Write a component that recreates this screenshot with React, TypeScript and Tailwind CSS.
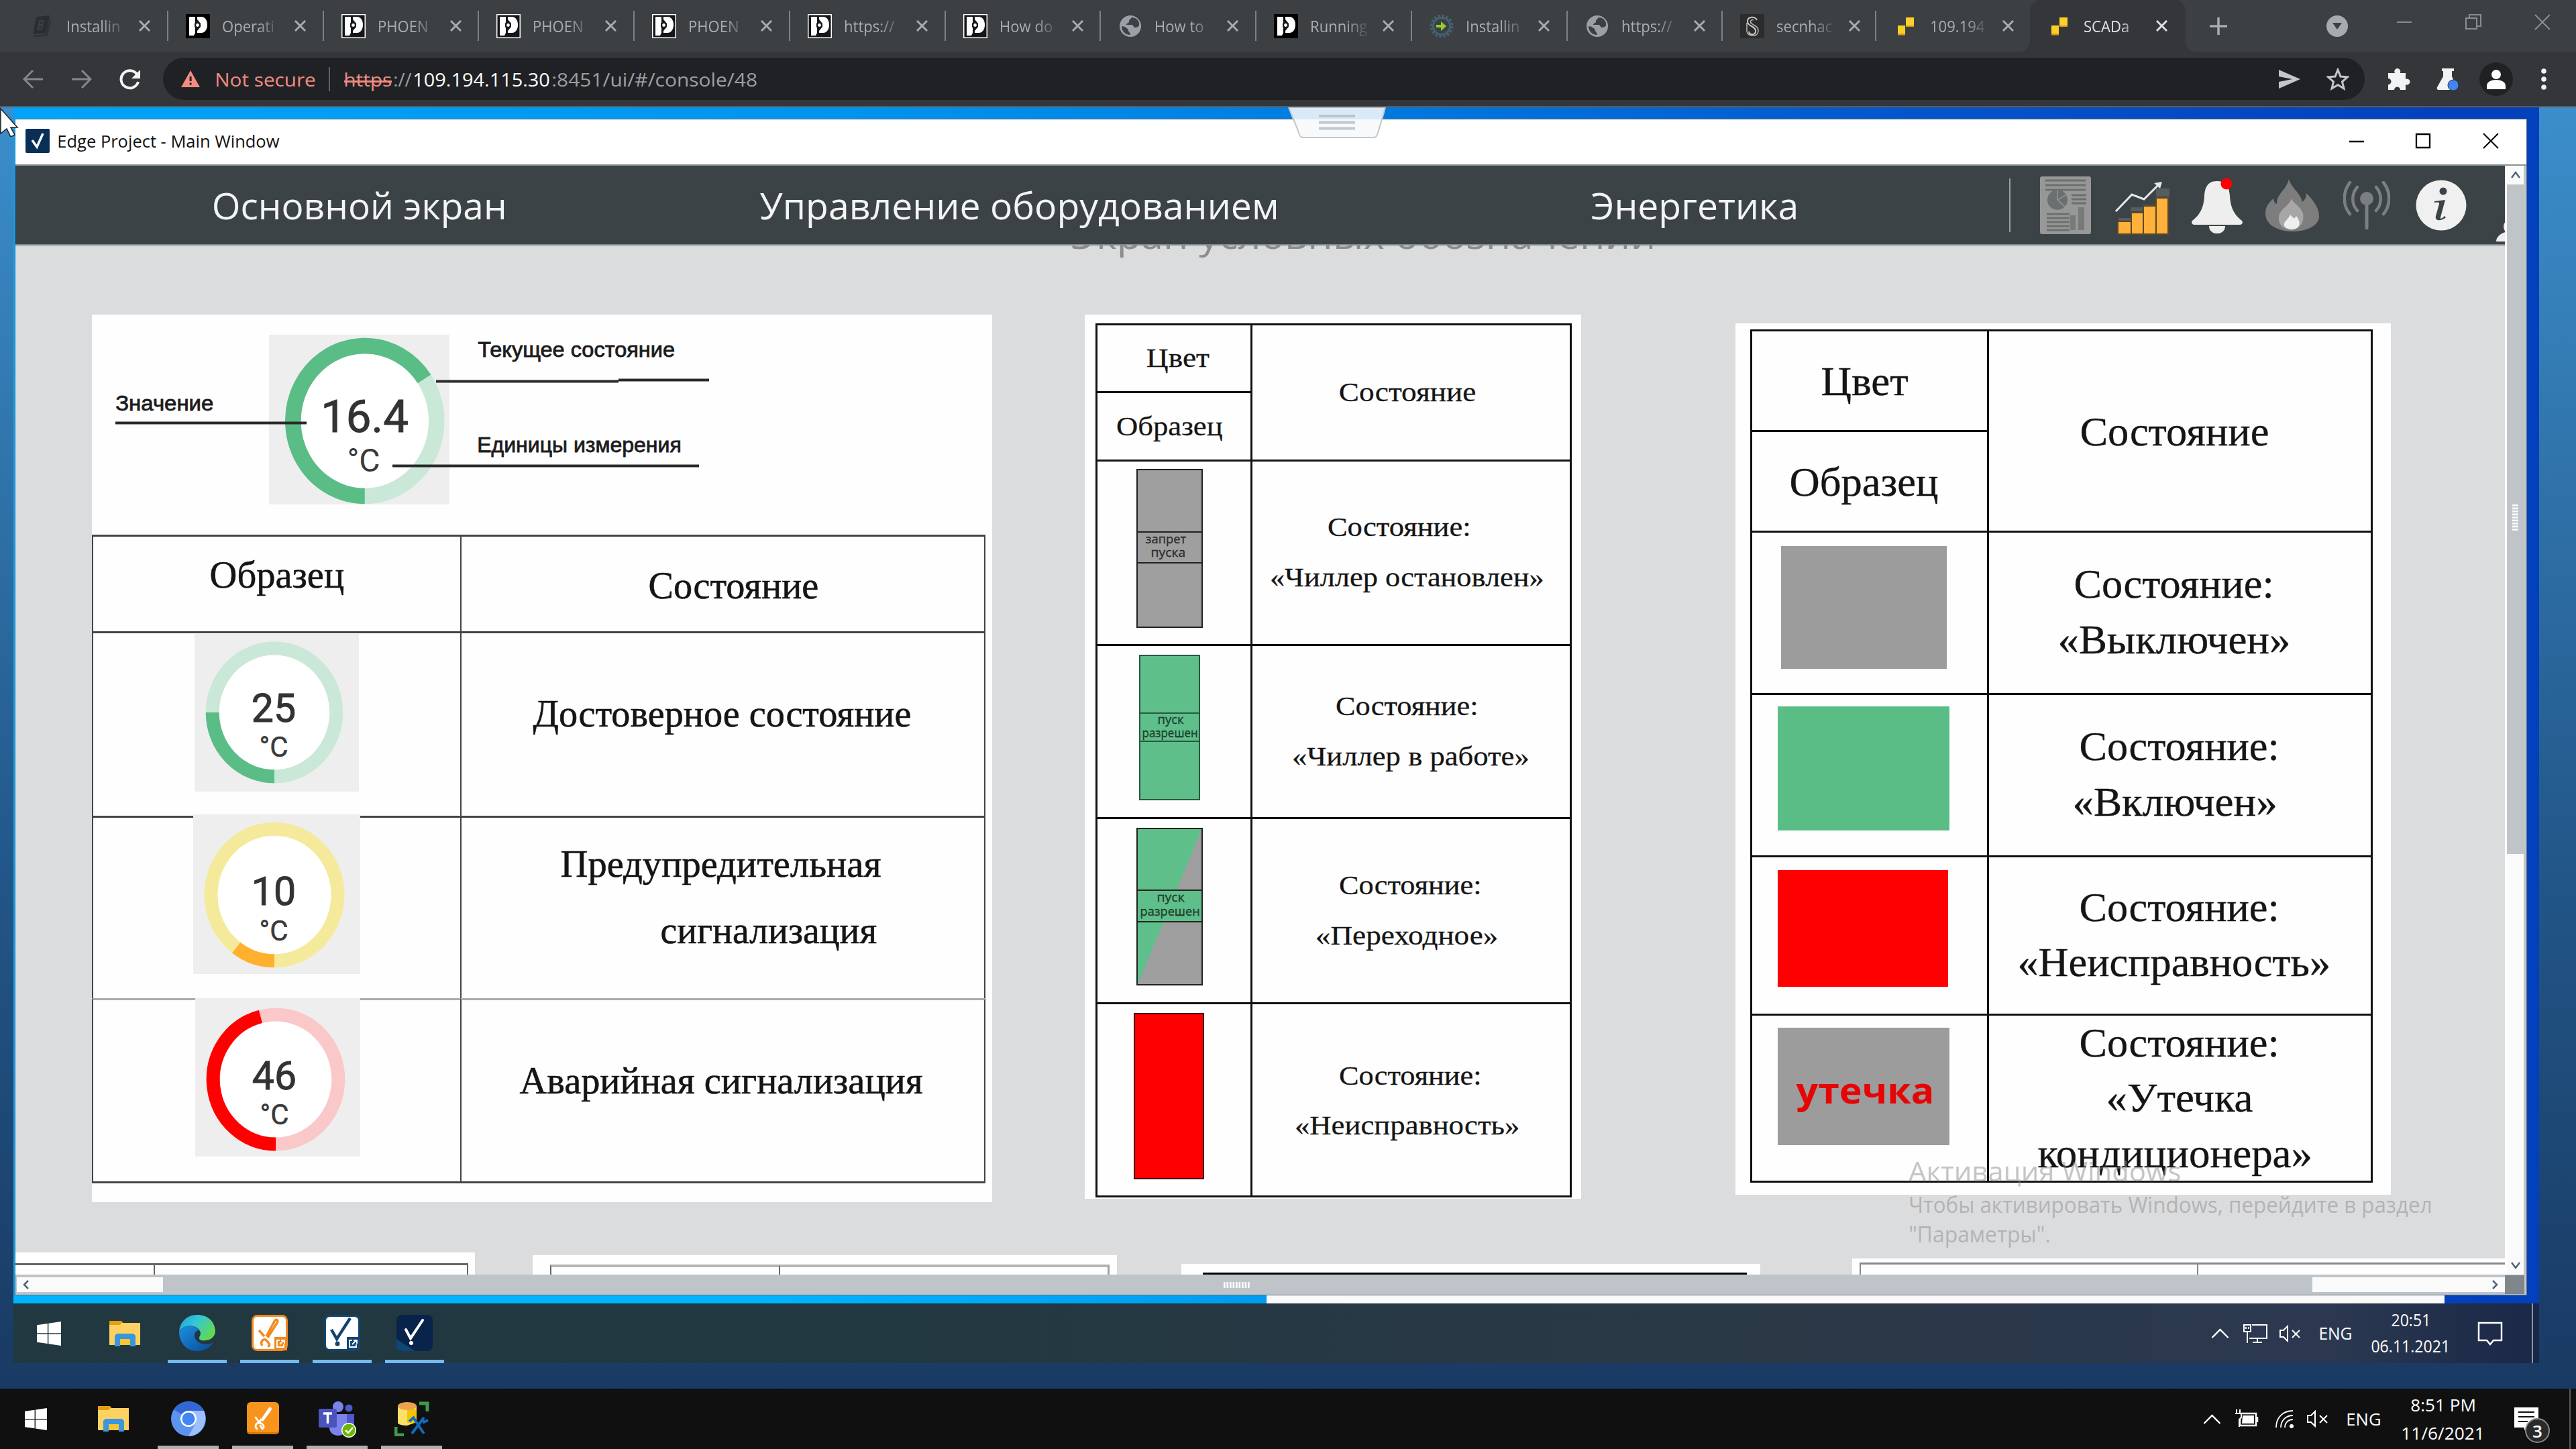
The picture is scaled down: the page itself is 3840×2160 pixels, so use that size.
import React, { useLayoutEffect, useRef, useState } from "react";

/* Text squeezed or stretched horizontally so that it fills its own box. */
function Fit({ className, children }: { className: string; children: string }) {
  const box = useRef<HTMLDivElement>(null);
  const ink = useRef<HTMLSpanElement>(null);
  const [fit, setFit] = useState({ scale: 1, shift: 0 });
  useLayoutEffect(() => {
    if (!box.current || !ink.current) return;
    const size = parseFloat(getComputedStyle(ink.current).fontSize);
    const bearing = size * 0.025;
    const scale = box.current.clientWidth / (ink.current.offsetWidth - bearing * 2);
    setFit({ scale, shift: -bearing * scale });
  }, []);
  return (
    <div ref={box} className={"shrink-0 whitespace-nowrap leading-none " + className}>
      <span
        ref={ink}
        className="inline-block origin-left leading-none"
        style={{ transform: `translateX(${fit.shift}px) scaleX(${fit.scale})` }}
      >
        {children}
      </span>
    </div>
  );
}

/* ---------- browser chrome ---------- */

function PhoenixIcon({ framed }: { framed?: boolean }) {
  return (
    <svg className="h-9 w-9" viewBox="0 0 36 36">
      <rect width="36" height="36" fill={framed ? "#fff" : "#000"} />
      {framed && <rect x="1.5" y="1.5" width="33" height="33" fill="#16161a" />}
      <path d="M5 4h9v24l-2 4H5z" fill="#fff" />
      <path d="M17 4h6c6 0 9 6 9 12s-3 12-9 12h-6z" fill="#fff" />
      <path d="M17 8l5 6v5l-5 6-4-6v-5z" fill="#16161a" />
      <circle cx="17.500" cy="16.500" r="2.400" fill="#fff" />
    </svg>
  );
}

function GlobeIcon() {
  return (
    <svg className="h-9 w-9" viewBox="0 0 36 36">
      <circle cx="18" cy="18" r="16" fill="#9aa0a6" />
      <path d="M20 5c-2 3-4 3-4 6 0 3-4 2-4 5h8c3 0 2 4 5 4s5-1 6-3C32 10 27 5 20 5z" fill="#3c4043" />
      <path d="M5 18c4 0 9 3 10 6 0 3 3 3 3 7-8 0-13-6-13-13z" fill="#3c4043" />
    </svg>
  );
}

function GearArrowIcon() {
  return (
    <svg className="h-9 w-9" viewBox="0 0 36 36">
      <circle cx="18" cy="18" r="15.500" fill="none" stroke="#45606f" strokeWidth="4" strokeDasharray="3.500 2.600" />
      <circle cx="18" cy="18" r="12.500" fill="none" stroke="#45606f" strokeWidth="3" />
      <path d="M10 16h7v-5l8 7-8 7v-5h-7z" fill="#8fd12c" />
    </svg>
  );
}

function SecIcon() {
  return (
    <svg className="h-9 w-9" viewBox="0 0 36 36">
      <rect width="36" height="36" fill="#2c2c2c" />
      <path d="M25 9c-2-6-14-6-14 2s12 6 12 14c0 7-9 7-10 1" fill="none" stroke="#c8c8c8" strokeWidth="2" />
      <path d="M20 9c-4-2-6 3-3 5 5 4 10 4 10 11 0 10-16 9-17 1V13" fill="none" stroke="#b4b4b4" strokeWidth="1.600" />
    </svg>
  );
}

function ScadaIcon() {
  return (
    <svg className="h-9 w-9" viewBox="0 0 36 36">
      <path d="M6 17h11v14H6z" fill="#fccf24" />
      <path d="M18 5h12v14H18z" fill="#fdd02c" />
      <path d="M6 29h11v2.500H6zM18 17h12v2H18z" fill="#d99a14" />
    </svg>
  );
}

function BookIcon() {
  return (
    <svg className="h-9 w-9" viewBox="0 0 36 36">
      <path d="M9 4l20-2-5 26-20 2z" fill="#2b2e31" />
      <path d="M30 7l-5 24-20 2" fill="none" stroke="#303336" strokeWidth="2.500" />
      <path d="M14 10h5l-1 6h-5zM13 17h5l-1 6h-5z" fill="none" stroke="#3c4043" strokeWidth="2" />
    </svg>
  );
}

function CloseX({ className }: { className: string }) {
  return (
    <svg className={className} viewBox="0 0 18 18">
      <path d="M1 1l16 16M17 1L1 17" stroke="currentColor" strokeWidth="3" />
    </svg>
  );
}

const tabs: { title: string; icon: React.ReactNode }[] = [
  { title: "Installin", icon: <BookIcon /> },
  { title: "Operati", icon: <PhoenixIcon /> },
  { title: "PHOEN", icon: <PhoenixIcon framed /> },
  { title: "PHOEN", icon: <PhoenixIcon framed /> },
  { title: "PHOEN", icon: <PhoenixIcon framed /> },
  { title: "https://", icon: <PhoenixIcon framed /> },
  { title: "How do", icon: <PhoenixIcon framed /> },
  { title: "How to", icon: <GlobeIcon /> },
  { title: "Running", icon: <PhoenixIcon /> },
  { title: "Installin", icon: <GearArrowIcon /> },
  { title: "https://", icon: <GlobeIcon /> },
  { title: "secnhac", icon: <SecIcon /> },
  { title: "109.194", icon: <ScadaIcon /> },
];

function TabBody({ title, icon }: { title: string; icon: React.ReactNode }) {
  return (
    <>
      <div className="shrink-0">{icon}</div>
      <div className="ml-[18px] w-[90px] shrink-0 [mask-image:linear-gradient(to_right,black_60%,transparent)]">
        <span className="inline-block origin-left scale-x-[0.92] whitespace-nowrap text-[24px] leading-[34px]">{title}</span>
      </div>
      <CloseX className="ml-[18px] h-[17px] w-[17px] shrink-0" />
    </>
  );
}

function TabStrip() {
  return (
    <div className="flex h-[77px] shrink-0 items-stretch bg-[#3c4043] pl-[19px] font-['Open_Sans',sans-serif] text-[#a9adb1]">
      {tabs.map((t, i) => (
        <div key={i} className={(i < 11 ? "w-[231.750px]" : "w-[229px]") + " flex shrink-0 items-center pl-[26px]"}>
          <TabBody {...t} />
          {i < tabs.length - 1 && <div className="ml-auto h-[45px] w-[2px] bg-[#7e8286]" />}
        </div>
      ))}
      <div className="relative flex w-[232px] shrink-0 items-center rounded-t-[16px] bg-[#35363a] pl-[26px] text-[#dfe1e5]">
        <svg className="absolute -left-4 bottom-0 h-4 w-4" viewBox="0 0 16 16"><path d="M16 0v16H0c10 0 16-6 16-16z" fill="#35363a" /></svg>
        <svg className="absolute -right-4 bottom-0 h-4 w-4" viewBox="0 0 16 16"><path d="M0 0v16h16C6 16 0 10 0 0z" fill="#35363a" /></svg>
        <TabBody title="SCADa" icon={<ScadaIcon />} />
      </div>
      <div className="flex flex-1 items-center pl-[35px]">
        <svg className="h-7 w-7" viewBox="0 0 28 28"><path d="M14 1v26M1 14h26" stroke="#a9adb1" strokeWidth="3.500" /></svg>
        <svg className="ml-[147px] h-8 w-8" viewBox="0 0 32 32"><circle cx="16" cy="16" r="16" fill="#a7abaf" /><path d="M9 11h14l-7 10z" fill="#3c4043" /></svg>
        <svg className="mb-3 ml-[72px] h-6 w-6" viewBox="0 0 24 24"><path d="M1 12h22" stroke="#8b8e91" strokeWidth="2" /></svg>
        <svg className="mb-3 ml-[79px] h-6 w-6" viewBox="0 0 24 24"><path d="M1 6h16v16H1zM6 6V1h17v17h-5" fill="none" stroke="#8b8e91" strokeWidth="2" /></svg>
        <svg className="mb-3 ml-[79px] h-6 w-6" viewBox="0 0 24 24"><path d="M1 1l22 22M23 1L1 23" stroke="#8b8e91" strokeWidth="2" /></svg>
      </div>
    </div>
  );
}

function Toolbar() {
  return (
    <div className="flex h-[83px] shrink-0 items-center border-b-2 border-[#5b5c60] bg-[#35363a] font-['Open_Sans',sans-serif]">
      <svg className="ml-[34px] h-[30px] w-[30px]" viewBox="0 0 30 30"><path d="M30 15H3M15 2L2 15l13 13" fill="none" stroke="#85878a" strokeWidth="3" /></svg>
      <svg className="ml-[43px] h-[30px] w-[30px]" viewBox="0 0 30 30"><path d="M0 15h27M15 2l13 13-13 13" fill="none" stroke="#85878a" strokeWidth="3" /></svg>
      <svg className="ml-[41px] h-8 w-8" viewBox="0 0 32 32"><path d="M26 8.500A13 13 0 1 0 28 20" fill="none" stroke="#f1f3f4" strokeWidth="4" /><path d="M31 2v13H18z" fill="#f1f3f4" /></svg>
      <div className="ml-[33px] flex h-[63px] w-[3282px] shrink-0 items-center rounded-full bg-[#202124] text-[28px]">
        <svg className="ml-[27px] h-[25px] w-7" viewBox="0 0 28 25"><path d="M14 0l14 25H0z" fill="#f28b82" /><path d="M12.600 9h3v7h-3zM12.600 18.500h3v3h-3z" fill="#202124" /></svg>
        <Fit className="ml-[23px] w-[149px] text-[#f28b82]">Not secure</Fit>
        <div className="ml-5 h-9 w-[2px] bg-[#5f6368]" />
        <div className="relative ml-[21px]">
          <Fit className="w-[71px] text-[#f28b82]">https</Fit>
          <div className="absolute top-[16px] h-[3px] w-[71px] bg-[#f28b82]" />
        </div>
        <Fit className="ml-[3px] w-[26px] text-[#9aa0a6]">://</Fit>
        <Fit className="ml-[3px] w-[203px] text-white">109.194.115.30</Fit>
        <Fit className="ml-[4px] w-[305px] text-[#9aa0a6]">:8451/ui/#/console/48</Fit>
        <svg className="ml-auto mr-[39px] h-7 w-8" viewBox="0 0 32 28"><path d="M0 0l32 14L0 28V18l20-4L0 10z" fill="#c4c7ca" /></svg>
        <svg className="mr-[23px] h-[34px] w-[34px]" viewBox="0 0 34 34"><path d="M17 3l4 10 10.500.8-8 7 2.500 10.200-9-5.500-9 5.500 2.500-10.200-8-7L13 13z" fill="none" stroke="#c4c7ca" strokeWidth="3" /></svg>
      </div>
      <svg className="ml-[34px] h-[34px] w-[34px]" viewBox="0 0 34 34"><path d="M1 8h10a4.500 4.500 0 1 1 8-1v1h8v9a4.500 4.500 0 1 1 0 8v8h-8a4.500 4.500 0 0 0-9 0H1v-8a4.500 4.500 0 0 0 0-9z" fill="#f1f3f4" /></svg>
      <svg className="ml-[39px] h-[34px] w-[34px]" viewBox="0 0 34 34"><path d="M8 1h18v4h-3v8l8 17c0 2-1 3-3 3H3c-2 0-3-2-2-4l9-16V5H8z" fill="#f1f3f4" /><circle cx="25" cy="26" r="8" fill="#4285f4" stroke="#35363a" strokeWidth="1" /></svg>
      <svg className="ml-[30px] h-[50px] w-[50px]" viewBox="0 0 50 50"><circle cx="25" cy="25" r="25" fill="#202124" /><circle cx="25" cy="18" r="7" fill="#fff" /><path d="M11 40v-5c0-12 28-12 28 0v5z" fill="#fff" /></svg>
      <svg className="ml-[42px] h-8 w-2" viewBox="0 0 8 32"><circle cx="4" cy="4" r="3.800" fill="#f1f3f4" /><circle cx="4" cy="16" r="3.800" fill="#f1f3f4" /><circle cx="4" cy="28" r="3.800" fill="#f1f3f4" /></svg>
    </div>
  );
}

/* ---------- legend panels ---------- */

type GaugeSpec = { cx: number; cy: number; rx: number; ry: number; thick: number; turn: number; track: string; bar: string };

function Ring({ cx, cy, rx, ry, thick, turn, track, bar }: GaugeSpec) {
  const t = (turn * Math.PI) / 180;
  const ex = cx - rx * Math.sin(t);
  const ey = cy + ry * Math.cos(t);
  return (
    <>
      <ellipse cx={cx} cy={cy} rx={rx} ry={ry} fill="#fff" stroke={track} strokeWidth={thick} />
      <path d={`M${cx} ${cy + ry}A${rx} ${ry} 0 ${turn > 180 ? 1 : 0} 1 ${ex} ${ey}`} fill="none" stroke={bar} strokeWidth={thick} />
    </>
  );
}

function Gauge({ w, h, value, base, unitBase, mid, className, ...ring }: GaugeSpec & { w: number; h: number; value: string; base: number; unitBase: number; mid: number; className: string }) {
  return (
    <svg className={"relative shrink-0 font-[Roboto,sans-serif] " + className} viewBox={`0 0 ${w} ${h}`}>
      <rect width={w} height={h} fill="#eee" />
      <Ring {...ring} />
      <text x={mid} y={base} textAnchor="middle" fontSize="59" fill="#333" stroke="#333" strokeWidth="1">{value}</text>
      <text x={mid} y={unitBase} textAnchor="middle" fontSize="42" fill="#3a3a3a" stroke="#3a3a3a" strokeWidth="0.500">°C</text>
    </svg>
  );
}

function GaugeDiagram() {
  return (
    <div className="relative h-[328px] shrink-0 font-['Liberation_Sans',sans-serif] text-[31px] text-[#1c1c1c] [-webkit-text-stroke:0.800px_#1c1c1c]">
      <svg className="h-[328px] w-[1342px] font-[Roboto,sans-serif]" viewBox="137 469 1342 328">
        <rect x="401" y="499" width="269" height="253" fill="#eee" />
        <Ring cx={543.8} cy={627.5} rx={107} ry={112} thick={23.500} turn={236} track="#cae8d7" bar="#5bbd86" />
        <text x="543.500" y="644" textAnchor="middle" fontSize="67" fill="#333" stroke="#333" strokeWidth="1">16.4</text>
        <text x="542" y="703" textAnchor="middle" fontSize="48" fill="#3a3a3a">°C</text>
        <path d="M650 568.500h272M922 566.500h135M172 630.500h285M585 694.500h457" stroke="#2a2a2a" strokeWidth="4" />
      </svg>
      <Fit className="absolute left-[576px] top-[37px] w-[292px]">Текущее состояние</Fit>
      <Fit className="absolute left-[36px] top-[117px] w-[144px]">Значение</Fit>
      <Fit className="absolute left-[575px] top-[179px] w-[303px]">Единицы измерения</Fit>
    </div>
  );
}

function GaugePanel() {
  return (
    <div className="ml-[114px] flex h-[1323px] w-[1342px] shrink-0 flex-col bg-[#fefefe]">
      <GaugeDiagram />
      <div className="grid w-[1332px] grid-cols-[549px_783px] grid-rows-[144px_275px_272px_276px] border-[#444] text-[56px] [-webkit-text-stroke:0.600px_#151515]">
        <div className="border-l-2 border-t-[3px] border-[#444]"><Fit className="ml-[175px] mt-[29px] w-[198px]">Образец</Fit></div>
        <div className="border-x-2 border-t-[3px] border-[#444]"><Fit className="ml-[280px] mt-[45px] w-[251px]">Состояние</Fit></div>
        <div className="border-l-2 border-t-[3px] border-[#444]">
          <Gauge className="ml-[151px] mt-px h-[235px] w-[245px]" w={245} h={235} cx={119} cy={117} rx={92.3} ry={95.5} thick={20} turn={90} track="#cae8d7" bar="#5bbd86" value="25" base={131} unitBase={182.5} mid={118} />
        </div>
        <div className="border-x-2 border-t-[3px] border-[#444]"><Fit className="ml-[108px] mt-[92px] w-[561px]">Достоверное состояние</Fit></div>
        <div className="border-l-2 border-t-[3px] border-[#444]">
          <Gauge className="-mt-[5px] ml-[149px] h-[238px] w-[249px]" w={249} h={238} cx={121} cy={120} rx={94.5} ry={98.3} thick={20} turn={37} track="#f5ea9c" bar="#ffb02e" value="10" base={135} unitBase={187.5} mid={120} />
        </div>
        <div className="border-x-2 border-t-[3px] border-[#444]">
          <Fit className="ml-[149px] mt-[41px] w-[475px]">Предупредительная</Fit>
          <Fit className="ml-[298px] mt-[43px] w-[320px]">сигнализация</Fit>
        </div>
        <div className="border-b-[3px] border-l-2 border-t-[3px] border-[#444] border-t-[#aaa]">
          <Gauge className="-mt-[3px] ml-[152px] h-[236px] w-[246px]" w={246} h={236} cx={120} cy={121} rx={93.3} ry={96.5} thick={20} turn={166} track="#fac8c8" bar="#ff0000" value="46" base={136} unitBase={188} mid={118} />
        </div>
        <div className="border-x-2 border-b-[3px] border-t-[3px] border-[#444] border-t-[#aaa]"><Fit className="ml-[88px] mt-[92px] w-[598px]">Аварийная сигнализация</Fit></div>
      </div>
    </div>
  );
}

function ChillerPanel() {
  return (
    <div className="ml-[138px] h-[1318px] w-[740px] shrink-0 bg-[#fefefe] pl-4 pt-[13px]">
      <div className="grid w-[710px] grid-cols-[231px_479px] grid-rows-[203px_275px_258px_276px_291px] text-[41px] [-webkit-text-stroke:0.300px_#151515]">
        <div className="grid grid-rows-[101px_102px]">
          <div className="border-l-[3px] border-t-[3px] border-[#111]"><Fit className="ml-[74px] mt-[28px] w-[92px]">Цвет</Fit></div>
          <div className="border-l-[3px] border-t-[3px] border-[#111]"><Fit className="ml-[29px] mt-[29px] w-[157px]">Образец</Fit></div>
        </div>
        <div className="border-x-[3px] border-t-[3px] border-[#111]"><Fit className="ml-[130px] mt-[79px] w-[202px]">Состояние</Fit></div>

        <div className="border-l-[3px] border-t-[3px] border-[#111]">
          <div className="ml-[58px] mt-[11px] h-[237px] w-[99px] border-2 border-[#222] bg-[#9f9f9f] pt-[91px] font-['Open_Sans',sans-serif] text-[19px] text-[#333]">
            <div className="h-[48px] border-y-2 border-[#222]">
              <Fit className="ml-[12px] w-[60px]">запрет</Fit>
              <Fit className="mt-px ml-[20px] w-[51px]">пуска</Fit>
            </div>
          </div>
        </div>
        <div className="border-x-[3px] border-t-[3px] border-[#111]">
          <Fit className="ml-[113px] mt-[77px] w-[212px]">Состояние:</Fit>
          <Fit className="ml-[27px] mt-[34px] w-[407px]">«Чиллер остановлен»</Fit>
        </div>

        <div className="border-l-[3px] border-t-[3px] border-[#111]">
          <div className="ml-[62px] mt-[13px] h-[217px] w-[91px] border-2 border-[#285a3e] bg-[#5fbf8a] pt-[84px] font-['Open_Sans',sans-serif] text-[19px] text-[#1f4a33]">
            <div className="h-[44px] border-y-2 border-[#285a3e]">
              <Fit className="-mt-px ml-[26px] w-[38px]">пуск</Fit>
              <Fit className="mt-px ml-[3px] w-[82px]">разрешен</Fit>
            </div>
          </div>
        </div>
        <div className="border-x-[3px] border-t-[3px] border-[#111]">
          <Fit className="ml-[125px] mt-[69px] w-[211px]">Состояние:</Fit>
          <Fit className="ml-[60px] mt-[34px] w-[352px]">«Чиллер в работе»</Fit>
        </div>

        <div className="border-l-[3px] border-t-[3px] border-[#111]">
          <div className="ml-[58px] mt-[13px] h-[235px] w-[99px] border-2 border-[#222] bg-[linear-gradient(to_bottom_right,#5fbf8a_50%,#9f9f9f_50.300%)] pt-[90px] font-['Open_Sans',sans-serif] text-[19px] text-[#1f4a33]">
            <div className="h-[49px] border-y-2 border-[#222] bg-[#5fbf8a]">
              <Fit className="ml-[29px] w-[40px]">пуск</Fit>
              <Fit className="mt-[2px] ml-[4px] w-[88px]">разрешен</Fit>
            </div>
          </div>
        </div>
        <div className="border-x-[3px] border-t-[3px] border-[#111]">
          <Fit className="ml-[130px] mt-[78px] w-[211px]">Состояние:</Fit>
          <Fit className="ml-[95px] mt-[34px] w-[270px]">«Переходное»</Fit>
        </div>

        <div className="border-y-[3px] border-l-[3px] border-[#111]">
          <div className="ml-[54px] mt-[13px] h-[248px] w-[105px] border-2 border-[#4a1010] bg-[#ff0000]" />
        </div>
        <div className="border-[3px] border-[#111]">
          <Fit className="ml-[130px] mt-[86px] w-[211px]">Состояние:</Fit>
          <Fit className="ml-[64px] mt-[33px] w-[333px]">«Неисправность»</Fit>
        </div>
      </div>
    </div>
  );
}

function DevicePanel() {
  return (
    <div className="ml-[230px] mt-[13px] h-[1299px] w-[977px] shrink-0 bg-[#fefefe] pl-[22px] pt-[9px]">
      <div className="grid w-[928px] grid-cols-[353px_575px] grid-rows-[300px_242px_242px_236px_252px] text-[62px] [-webkit-text-stroke:0.400px_#151515]">
        <div className="grid grid-rows-[150px_150px]">
          <div className="border-l-[3px] border-t-[3px] border-[#111]"><Fit className="ml-[104px] mt-[43px] w-[127px]">Цвет</Fit></div>
          <div className="border-l-[3px] border-t-[3px] border-[#111]"><Fit className="ml-[57px] mt-[43px] w-[219px]">Образец</Fit></div>
        </div>
        <div className="border-x-[3px] border-t-[3px] border-[#111]"><Fit className="ml-[137px] mt-[118px] w-[279px]">Состояние</Fit></div>

        <div className="border-l-[3px] border-t-[3px] border-[#111]"><div className="ml-[43px] mt-5 h-[183px] w-[247px] bg-[#9c9c9c]" /></div>
        <div className="border-x-[3px] border-t-[3px] border-[#111]">
          <Fit className="ml-[128px] mt-[45px] w-[295px]">Состояние:</Fit>
          <Fit className="ml-[104px] mt-[21px] w-[344px]">«Выключен»</Fit>
        </div>

        <div className="border-l-[3px] border-t-[3px] border-[#111]"><div className="ml-[38px] mt-[17px] h-[185px] w-[256px] bg-[#5bbd86]" /></div>
        <div className="border-x-[3px] border-t-[3px] border-[#111]">
          <Fit className="ml-[136px] mt-[45px] w-[295px]">Состояние:</Fit>
          <Fit className="ml-[126px] mt-[21px] w-[302px]">«Включен»</Fit>
        </div>

        <div className="border-l-[3px] border-t-[3px] border-[#111]"><div className="ml-[38px] mt-[19px] h-[174px] w-[254px] bg-[#ff0000]" /></div>
        <div className="border-x-[3px] border-t-[3px] border-[#111]">
          <Fit className="ml-[136px] mt-[43px] w-[295px]">Состояние:</Fit>
          <Fit className="ml-[44px] mt-5 w-[464px]">«Неисправность»</Fit>
        </div>

        <div className="border-y-[3px] border-l-[3px] border-[#111]">
          <div className="ml-[38px] mt-[18px] h-[175px] w-[256px] bg-[#9c9c9c] pl-[29px] pt-[65px] font-['Open_Sans',sans-serif] text-[54px] font-bold text-[#e60505] [-webkit-text-stroke:0px]">
            <Fit className="w-[203px]">утечка</Fit>
          </div>
        </div>
        <div className="border-[3px] border-[#111]">
          <Fit className="ml-[136px] mt-[9px] w-[295px]">Состояние:</Fit>
          <Fit className="ml-[176px] mt-5 w-[216px]">«Утечка</Fit>
          <Fit className="ml-[74px] mt-[21px] w-[406px]">кондиционера»</Fit>
        </div>
      </div>
    </div>
  );
}

/* Tops of the tables that continue below the visible area. */
function NextRow() {
  return (
    <div className="mt-[75px] flex h-10 shrink-0">
      <div className="flex w-[685px] shrink-0 bg-[#fefefe] pt-4">
        <div className="w-[206px] border-t-[3px] border-[#666]" />
        <div className="w-[469px] border-x-2 border-t-[3px] border-[#666]" />
      </div>
      <div className="ml-[86px] mt-1 flex w-[871px] shrink-0 bg-[#fefefe] pl-[26px] pt-[14px]">
        <div className="w-[341px] border-l-2 border-t-[4px] border-[#666] border-t-[#b4b4b4]" />
        <div className="w-[493px] border-l-2 border-r-[3px] border-t-[4px] border-[#666] border-r-[#a0a0a0] border-t-[#b4b4b4]" />
      </div>
      <div className="ml-[96px] mt-[17px] w-[863px] shrink-0 bg-[#fefefe] pl-[32px] pt-[13px]">
        <div className="h-[3px] w-[811px] bg-black" />
      </div>
      <div className="ml-[137px] mt-[9px] flex w-[973px] shrink-0 bg-[#fefefe] pl-[11px] pt-[6px]">
        <div className="w-[504px] border-l-2 border-t-[3px] border-[#888]" />
        <div className="w-[460px] border-l-2 border-t-[3px] border-[#888]" />
      </div>
    </div>
  );
}

/* ---------- remote application window ---------- */

function NavIcons() {
  return (
    <>
      <svg className="ml-[43px] h-[88px] w-[78px] shrink-0" viewBox="0 0 78 88">
        <rect x="1" y="1" width="76" height="86" rx="3" fill="#979797" />
        <path d="M9 10h60M9 17h60M9 24h60M48 32h22M48 38h22M48 44h22M11 60h34M11 66h34M11 72h34M11 78h34M11 84h34" transform="translate(0 -3)" stroke="#6b6f70" strokeWidth="2.800" />
        <circle cx="27" cy="36" r="15" fill="#6b6f70" />
        <path d="M27 36V21M27 36l11 10M27 36l12-7" stroke="#8d8f90" strokeWidth="1.800" />
        <path d="M46 59h8v22h-8zM58 47h9v34h-9z" fill="#767a7b" />
      </svg>
      <svg className="ml-[34px] mt-2 h-[82px] w-[84px] shrink-0" viewBox="0 0 84 82">
        <path d="M62 12h20v12H62zM42 36h20v8H42zM24 40h18v6H24zM6 56h18v6H6z" fill="#565c5f" />
        <path d="M5 61h20v19H5zM25 48h18v32H25zM43 38h19v42H43zM62 26h18v54H62z" fill="#ffb13b" stroke="#5a4a22" strokeWidth="2" />
        <path d="M2 46l24-25 18 7L66 6" fill="none" stroke="#e8e8e8" strokeWidth="3" />
        <path d="M59 4l12-2-3 10z" fill="#e8e8e8" />
      </svg>
      <svg className="ml-[29px] h-[84px] w-[80px] shrink-0" viewBox="0 0 80 84">
        <path d="M28 73h24c0 15-24 15-24 0z" fill="#eee" />
        <path d="M40 6c14 0 18 9 19 22 1 20 8 29 18 37 2 3 0 6-3 6H6c-3 0-5-3-3-6 10-8 17-17 18-37C22 15 26 6 40 6z" fill="#eee" />
        <circle cx="54" cy="10" r="8.500" fill="#ff0000" />
      </svg>
      <svg className="ml-[31px] h-[80px] w-[82px] shrink-0" viewBox="0 0 82 80">
        <path d="M36 1c4 14 17 20 20 34 5-4 6-8 6-13 12 12 20 24 19 36-2 14-20 21-40 21S1 70 1 52c0-10 5-16 12-22 1 5 2 7 5 8 0-16 14-20 18-37z" fill="#7d7d7d" />
        <path d="M40 30c3 8 14 12 17 22 2 12-2 22-17 25-16-2-22-12-18-24 3-8 14-12 18-23z" fill="#a7a7a7" />
        <path d="M38 54c2 3 5 4 6 6l3-4c5 6 6 12 3 16-3 5-16 5-20 0-4-7 5-10 8-18z" fill="#eee" />
      </svg>
      <svg className="ml-[35px] h-[72px] w-[70px] shrink-0" viewBox="0 0 70 72">
        <path d="M35 34v36" stroke="#7b7f80" strokeWidth="5" strokeLinecap="round" />
        <circle cx="35" cy="26" r="10" fill="#7b7f80" />
        <path d="M21 9c-9 10-9 25 0 35M10 2C-1 16-1 36 10 49M49 9c9 10 9 25 0 35M60 2c11 14 11 34 0 47" fill="none" stroke="#7b7f80" strokeWidth="4.500" strokeLinecap="round" />
      </svg>
      <svg className="ml-[38px] h-[76px] w-[76px] shrink-0" viewBox="0 0 76 76">
        <circle cx="38" cy="38" r="37.500" fill="#f0f0f0" />
        <circle cx="41" cy="17" r="5.500" fill="#3c4346" />
        <path d="M28 32l16-2-7 26c-1 4 3 1 6-2l2 2c-5 5-17 7-15-2l5-18c1-3-3-3-7-2z" fill="#3c4346" />
      </svg>
      <svg className="ml-[43px] mt-20 h-8 w-4 shrink-0" viewBox="0 0 16 32"><path d="M16 0c-6 4-4 12-1 16-8 2-14 8-14 14h15z" fill="#eee" /></svg>
    </>
  );
}

function EdgeWindow() {
  return (
    <div className="ml-[2px] flex h-[1754px] w-[3745px] shrink-0 flex-col border border-[#5a6e80] bg-white">
      <div className="flex h-[67px] shrink-0 items-center pb-[3px] pr-[41px] font-['Open_Sans',sans-serif] text-[25px] text-[#111]">
        <svg className="ml-[15px] h-9 w-9" viewBox="0 0 36 36"><rect width="36" height="36" rx="2" fill="#0a2f57" /><path d="M10 17l7 10L26 7" fill="none" stroke="#fff" strokeWidth="3.500" /></svg>
        <Fit className="ml-[12px] w-[330px]">Edge Project - Main Window</Fit>
        <svg className="ml-auto h-6 w-6" viewBox="0 0 24 24"><path d="M1 13h22" stroke="#000" strokeWidth="2.500" /></svg>
        <svg className="ml-[75px] h-6 w-6" viewBox="0 0 24 24"><path d="M2 2h20v20H2z" fill="none" stroke="#000" strokeWidth="2.300" /></svg>
        <svg className="ml-[77px] h-6 w-6" viewBox="0 0 24 24"><path d="M1 1l22 22M23 1L1 23" stroke="#000" strokeWidth="2" /></svg>
      </div>
      <div className="flex h-[1655px] shrink-0 border-t-2 border-[#8a9497]">
        <div className="flex w-[3711px] shrink-0 flex-col">
          <div className="flex h-[119px] shrink-0 items-center overflow-hidden border-b-2 border-[#858b8d] bg-[#3c4346] font-['Open_Sans',sans-serif] text-[54px] text-[#f4f4f4]">
            <Fit className="ml-[294px] w-[437px]">Основной экран</Fit>
            <Fit className="ml-[380px] w-[771px]">Управление оборудованием</Fit>
            <Fit className="ml-[468px] w-[307px]">Энергетика</Fit>
            <div className="ml-[315px] h-20 w-[2px] shrink-0 bg-[#9a9fa1]" />
            <NavIcons />
          </div>
          <div className="relative flex h-[1534px] shrink-0 flex-col overflow-hidden bg-[#dbdcde] font-['Liberation_Serif',serif] text-[#151515]">
            <Fit className="-mt-[43px] ml-[1575px] w-[869px] font-['Open_Sans',sans-serif] text-[54px] text-[#8c8c8c]">Экран условных обозначений</Fit>
            <div className="mt-[92px] flex h-[1323px] shrink-0 items-start">
              <GaugePanel />
              <ChillerPanel />
              <DevicePanel />
            </div>
            <NextRow />
            <div className="absolute left-[2823px] top-[1359px] font-['Open_Sans',sans-serif] text-[#8a8a8a]/50">
              <Fit className="w-[404px] text-[41px]">Активация Windows</Fit>
              <Fit className="mt-[14px] w-[779px] text-[32px]">Чтобы активировать Windows, перейдите в раздел</Fit>
              <Fit className="mt-[12px] w-[210px] text-[32px]">"Параметры".</Fit>
            </div>
          </div>
        </div>
        <div className="flex w-[32px] shrink-0 flex-col items-start border-l-[3px] border-white bg-[#bfc4c8]">
          <div className="flex h-[28px] w-[25px] items-center justify-center bg-[#fafafa]">
            <svg className="h-3 w-3.5" viewBox="0 0 14 12"><path d="M1 10l6-8 6 8" fill="none" stroke="#4d6478" strokeWidth="2.500" /></svg>
          </div>
          <svg className="ml-[8px] mt-[477px] h-[39px] w-[9px]" viewBox="0 0 9 39"><path d="M4.500 0v39" stroke="#fafafa" strokeWidth="9" strokeDasharray="2.700 1.800" /></svg>
          <div className="mt-[482px] flex h-[627px] w-[25px] items-end justify-center bg-[#fafafa] pb-2">
            <svg className="h-3 w-3.5" viewBox="0 0 14 12"><path d="M1 2l6 8 6-8" fill="none" stroke="#4d6478" strokeWidth="2.500" /></svg>
          </div>
        </div>
      </div>
      <div className="flex h-[30px] shrink-0 items-center bg-[#bfc4c8]">
        <div className="ml-[2px] flex h-[22px] w-[218px] items-center bg-[#fafafa] pl-[9px]">
          <svg className="h-3.5 w-2.5" viewBox="0 0 10 14"><path d="M8 1L2 7l6 6" fill="none" stroke="#4d6478" strokeWidth="2.500" /></svg>
        </div>
        <svg className="ml-[1581px] h-[9px] w-[39px]" viewBox="0 0 39 9"><path d="M0 4.500h39" stroke="#fafafa" strokeWidth="9" strokeDasharray="2.700 1.800" /></svg>
        <div className="ml-auto flex h-[22px] w-[287px] items-center justify-end bg-[#fafafa] pr-[10px]">
          <svg className="h-3.5 w-2.5" viewBox="0 0 10 14"><path d="M2 1l6 6-6 6" fill="none" stroke="#4d6478" strokeWidth="2.500" /></svg>
        </div>
        <div className="mr-[3px] h-[28px] w-[29px] bg-[#80878a]" />
      </div>
    </div>
  );
}

/* ---------- task bars ---------- */

function WinLogo({ className }: { className: string }) {
  return (
    <svg className={className} viewBox="0 0 34 34"><path d="M0 5l15-2.200V16.400H0zM16.400 2.600L34 0v16.400H16.400zM0 17.700h15v13.500L0 29zM16.400 17.700H34V34l-17.600-2.600z" fill="#fff" /></svg>
  );
}

function FolderIcon({ className }: { className: string }) {
  return (
    <svg className={className} viewBox="0 0 48 40">
      <path d="M1 1h18l4 5v8H1z" fill="#e3a10d" />
      <path d="M1 7h15l4-3h27v33H1z" fill="#fdd262" />
      <path d="M9 39V23l3-3h25l3 3v16h-8V28H17v11z" fill="#3a96dd" />
      <path d="M17 28h15v9H17z" fill="#fbc531" />
    </svg>
  );
}

function EdgeLogo() {
  return (
    <svg className="h-[54px] w-[54px]" viewBox="0 0 54 54">
      <defs>
        <linearGradient id="edgeTop" x1="0" y1="0" x2="1" y2="0.500"><stop offset="0" stopColor="#1ba5e0" /><stop offset="0.500" stopColor="#35c8d5" /><stop offset="1" stopColor="#5fd855" /></linearGradient>
        <linearGradient id="edgeLow" x1="0" y1="0" x2="1" y2="1"><stop offset="0" stopColor="#1b8fe0" /><stop offset="1" stopColor="#0c4a9a" /></linearGradient>
      </defs>
      <path d="M27 0C11 0 1 11 0 26c4-12 28-14 32 1 0 4-2 5-2 8 0 3 5 4 10 3 9-1 14-7 14-14C53 9 42 0 27 0z" fill="url(#edgeTop)" />
      <path d="M0 27C1 43 12 54 27 54c11 0 19-5 24-13-8 5-20 4-26-4-5-7-1-13 5-15C22 13 3 15 0 27z" fill="url(#edgeLow)" />
    </svg>
  );
}

function CheckTile({ orange }: { orange?: boolean }) {
  const c = orange ? "#f28a22" : "#12456f";
  return (
    <svg className="h-[54px] w-[54px]" viewBox="0 0 54 54">
      <rect x="1.500" y="1.500" width="51" height="51" rx="7" fill="#fff" stroke={c} strokeWidth="3" />
      {orange ? (
        <path d="M35 8L22 32M35 8c3-2 5 1 3 4L24 34M11 23l8 9M16 46c-4-6 2-12 6-8s7 8 2 9" fill="none" stroke={c} strokeWidth="3.500" />
      ) : (
        <path d="M11 22l8 14L39 5" fill="none" stroke={c} strokeWidth="4.500" />
      )}
      {!orange && <circle cx="20" cy="43" r="3.500" fill={c} />}
      <path d="M34 33h19v20H34z" fill={c} />
      <path d="M42 38h-4v10h10v-4M42 44l6-6M44 38h5v5" fill="none" stroke="#fff" strokeWidth="1.800" />
    </svg>
  );
}

function NavyTile() {
  return (
    <svg className="h-[54px] w-[54px]" viewBox="0 0 54 54">
      <rect width="54" height="54" rx="8" fill="#08244a" />
      <path d="M0 36v10c0 5 3 8 8 8h20z" fill="#0e4676" />
      <path d="M14 22l7 13L39 8" fill="none" stroke="#fff" strokeWidth="4" strokeLinecap="round" />
      <circle cx="22" cy="42" r="3" fill="#fff" />
    </svg>
  );
}

function Chevron() {
  return <svg className="h-[15px] w-[27px]" viewBox="0 0 27 15"><path d="M1.500 14l12-12 12 12" fill="none" stroke="#fff" strokeWidth="2.300" /></svg>;
}

function Muted() {
  return <svg className="h-[26px] w-[32px]" viewBox="0 0 32 26"><path d="M1 8h5l6-6v22l-6-6H1zM19 8l11 11M30 8L19 19" fill="none" stroke="#fff" strokeWidth="2" /></svg>;
}

function RemoteTaskbar() {
  const apps = [<EdgeLogo key="e" />, <CheckTile key="o" orange />, <CheckTile key="b" />, <NavyTile key="n" />];
  return (
    <div className="flex h-[89px] shrink-0 items-center bg-[linear-gradient(to_right,#223840_0%,#223840_35%,#2b3947_70%,#2b3850_92%,#1a2747_100%)] font-['Open_Sans',sans-serif] text-[25px] text-white">
      <WinLogo className="ml-[35px] h-[36px] w-[36px]" />
      <FolderIcon className="ml-[71px] h-10 w-12" />
      <div className="ml-[40px] flex gap-5 self-stretch">
        {apps.map((icon, i) => (
          <div key={i} className="flex w-[88px] flex-col items-center pt-[17px]">
            {icon}
            <div className="mt-auto h-[5px] w-[88px] bg-[#76b9ed]" />
          </div>
        ))}
      </div>
      <div className="ml-auto flex items-center">
        <Chevron />
        <svg className="ml-[21px] h-[30px] w-[37px]" viewBox="0 0 37 30"><path d="M13 2h22v20H9M21 22v6M14 28h14M1 2h10v10H1zM6 12v17M4 5v3M8 5v3" fill="none" stroke="#fff" strokeWidth="2" /></svg>
        <div className="ml-[17px]"><Muted /></div>
        <Fit className="ml-[27px] w-[49px]">ENG</Fit>
        <div className="mb-[2px] ml-[29px] flex w-[117px] flex-col items-center">
          <Fit className="w-[58px]">20:51</Fit>
          <Fit className="mt-[14px] w-[117px]">06.11.2021</Fit>
        </div>
        <svg className="ml-[41px] h-[36px] w-[38px]" viewBox="0 0 38 36"><path d="M2 2h34v26H24l-5 6-5-6H2z" fill="none" stroke="#fff" strokeWidth="2.500" /></svg>
        <div className="ml-[43px] mr-[9px] h-[89px] w-[2px] bg-[#8d95a5]" />
      </div>
    </div>
  );
}

function HostTaskbar() {
  const apps = [
    <svg key="c" className="h-[52px] w-[52px]" viewBox="0 0 52 52">
      <circle cx="26" cy="26" r="26" fill="#5b93ef" />
      <path d="M26 26L4 12C14-4 40-4 49 14H26z" fill="#3367d6" />
      <path d="M26 14h23c7 18-5 38-23 38l11-20z" fill="#9dc0fb" />
      <circle cx="26" cy="26" r="12" fill="#fff" /><circle cx="26" cy="26" r="9.500" fill="#4285f4" />
    </svg>,
    <svg key="o" className="h-[50px] w-[50px]" viewBox="0 0 50 50">
      <rect x="1" y="1" width="48" height="48" rx="6" fill="#f7941e" />
      <path d="M1 46h48c-1 2-3 3-6 3H7c-3 0-5-1-6-3z" fill="#d97708" />
      <path d="M34 9c3-1 5 1 3 5L25 30l-4-2z" fill="#fff" />
      <path d="M22 27l-3 5M14 24l6 8M16 41c-5-5 1-11 5-9 5 2 7 7 3 9l-3-5" fill="none" stroke="#fff" strokeWidth="2.800" strokeLinecap="round" />
    </svg>,
    <svg key="t" className="h-[54px] w-[56px]" viewBox="0 0 56 54">
      <circle cx="29" cy="8" r="8" fill="#7b83eb" /><circle cx="45" cy="10" r="5.500" fill="#5059c9" />
      <path d="M38 19h15v18c0 8-15 9-15 0z" fill="#5059c9" />
      <path d="M16 19h26v20c0 16-26 16-26 0z" fill="#7b83eb" />
      <rect y="11" width="27" height="28" rx="2" fill="#4b53bc" />
      <path d="M7 18h13M13.500 18v15" stroke="#fff" strokeWidth="3.500" />
      <circle cx="45" cy="43" r="11" fill="#fff" /><circle cx="45" cy="43" r="9.500" fill="#6bb700" />
      <path d="M40 43l4 4 7-8" fill="none" stroke="#fff" strokeWidth="2.500" />
    </svg>,
    <svg key="d" className="h-[52px] w-[52px]" viewBox="0 0 52 52">
      <path d="M5 7h28v24l-14 5c-8 0-14-2-14-4z" fill="#fbe06a" /><path d="M19 12h14v20H19z" fill="#f5c400" />
      <ellipse cx="19" cy="7" rx="14" ry="6" fill="#eda24e" />
      <path d="M37 3h12v12M2 38v12h12" fill="none" stroke="#3e9b4a" strokeWidth="5" />
      <path d="M26 48l18-24M44 48L28 24M22 30l8-7M40 26l4 5 6-3" fill="none" stroke="#0f6cbd" strokeWidth="4" />
    </svg>,
  ];
  return (
    <div className="flex h-[90px] shrink-0 items-center bg-[#101010] font-['Open_Sans',sans-serif] text-[26px] text-white">
      <WinLogo className="ml-[37px] h-[33px] w-[33px]" />
      <FolderIcon className="ml-[75px] h-10 w-12" />
      <div className="ml-[42px] flex gap-5 self-stretch">
        {apps.map((icon, i) => (
          <div key={i} className="flex w-[91px] flex-col items-center pt-[19px]">
            {icon}
            <div className="mt-auto h-[5px] w-[91px] bg-[#b3b0ac]" />
          </div>
        ))}
      </div>
      <div className="ml-auto flex items-center">
        <Chevron />
        <svg className="ml-[20px] h-[28px] w-[36px]" viewBox="0 0 36 28"><path d="M10 6h22v18H8V14M34 11v8" fill="none" stroke="#fff" strokeWidth="2.500" /><path d="M12 9h17v12H11z" fill="#fff" /><path d="M3 0v6M8 0v6M1 6h9v6l-3 3v11" fill="none" stroke="#fff" strokeWidth="2" /></svg>
        <svg className="ml-[24px] h-[28px] w-[29px]" viewBox="0 0 29 28"><path d="M2 27C2 12 12 2 27 2M9 27c0-11 8-18 18-18M15 27c0-7 5-12 12-12" fill="none" stroke="#fff" strokeWidth="1.800" /><circle cx="25" cy="25" r="3" fill="#fff" /></svg>
        <div className="ml-[19px]"><Muted /></div>
        <Fit className="ml-[27px] w-[51px]">ENG</Fit>
        <div className="ml-[31px] flex w-[123px] flex-col items-center">
          <Fit className="w-[96px]">8:51 PM</Fit>
          <Fit className="mt-[16px] w-[123px]">11/6/2021</Fit>
        </div>
        <div className="relative ml-[45px] h-[34px] w-[36px]">
          <svg className="h-[34px] w-[36px]" viewBox="0 0 36 34"><path d="M0 0h36v30H20l-5 4v-4H0z" fill="#fff" /><path d="M6 7h24M6 14h24M6 21h14" stroke="#101010" strokeWidth="2" /></svg>
          <div className="absolute left-[16px] top-[16px] flex h-[37px] w-[37px] items-center justify-center rounded-full border-2 border-[#8a8a8a] bg-[#2a2a2a] text-[26px] font-semibold leading-none">3</div>
        </div>
        <div className="ml-[46px] mr-[8px] h-[90px] w-[2px] bg-[#5a5a5a]" />
      </div>
    </div>
  );
}

export default function App() {
  return (
    <div className="flex h-[2160px] w-[3840px] flex-col overflow-hidden">
      <TabStrip />
      <Toolbar />
      <div className="relative h-[1910px] shrink-0 bg-[linear-gradient(to_bottom,#3b8ecb_0%,#357fb8_16%,#225688_60%,#193a63_100%)] pl-5">
        <div className="flex h-[1872px] w-[3765px] flex-col bg-[linear-gradient(to_right,#00a4fa_0%,#0094ee_33%,#0078de_55%,#0455cb_75%,#0340bb_97%)]">
          <div className="h-[17px] shrink-0" />
          <EdgeWindow />
          <div className="flex h-[12px] shrink-0">
            <div className="w-[1868px] bg-[linear-gradient(to_right,#00b4ff_60%,#009cf0)]" />
            <div className="w-[1756px] bg-[#fafafa]" />
            <div className="flex-1 bg-[#0340bb]" />
          </div>
          <RemoteTaskbar />
        </div>
        {/* pull-down handle of the remote session */}
        <svg className="absolute left-[1920px] top-0 h-[46px] w-[146px]" viewBox="0 0 146 46">
          <path d="M1 0h144c-3 12-8 28-12 41-1 3-3 4-6 4H23c-3 0-5-1-6-4C13 28 6 14 1 0z" fill="#f7f8fa" fillOpacity="0.880" stroke="#c4c6c8" strokeWidth="2" />
          <path d="M46 13h54M46 22.500h54M46 31.500h54" stroke="#aab4bb" strokeOpacity="0.700" strokeWidth="4" />
        </svg>
        {/* mouse pointer */}
        <svg className="absolute left-0 top-0 h-[44px] w-[28px]" viewBox="0 0 28 44"><path d="M1 2l25 28H16l6 11-6 3-6-12-9 7z" fill="#fff" stroke="#222" strokeWidth="1.500" /></svg>
      </div>
      <HostTaskbar />
    </div>
  );
}
